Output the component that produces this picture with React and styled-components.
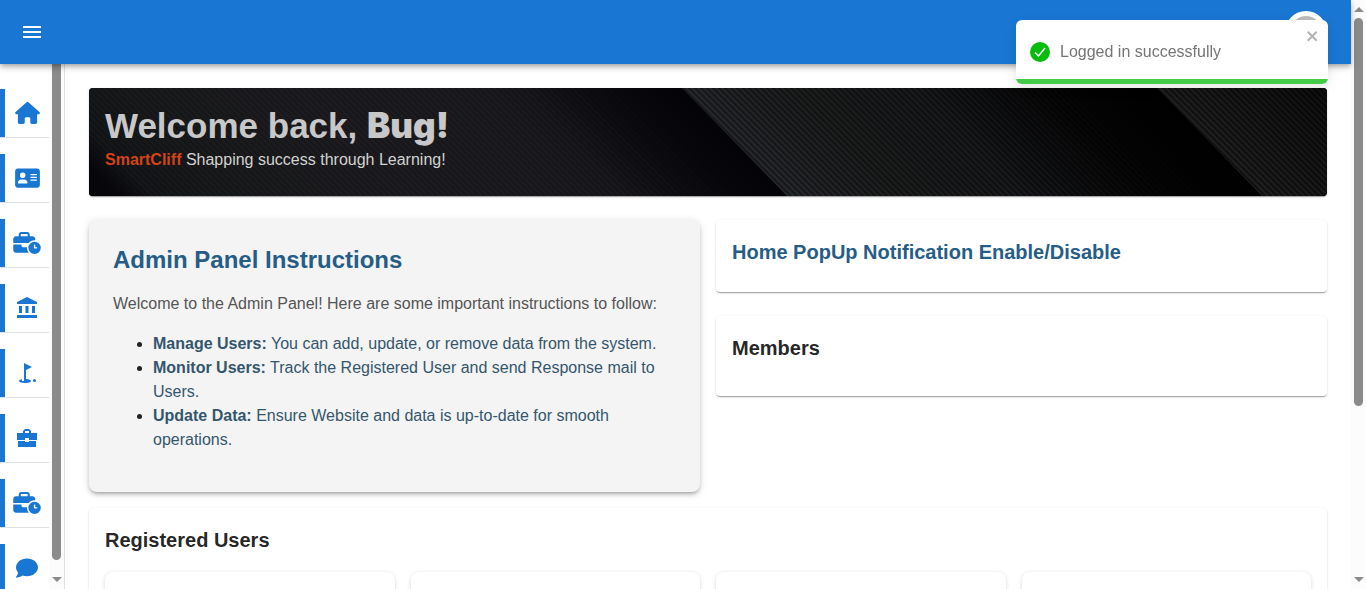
import React from "react";
import styled, { createGlobalStyle } from "styled-components";
import { FaHouse, FaAddressCard, FaBusinessTime, FaComment } from "react-icons/fa6";
import { MdAccountBalance, MdGolfCourse, MdMenu } from "react-icons/md";

const GlobalStyle = createGlobalStyle`
  *, *::before, *::after { box-sizing: border-box; }
  body {
    margin: 0;
    background: #fff;
    color: rgba(0, 0, 0, 0.87);
    font-family: "Liberation Sans", Arial, sans-serif;
    font-size: 16px;
    line-height: 24px;
  }
  h1, h2, p, ul { margin: 0; }
`;

const Window = styled.div`
  display: flex;
  height: 100vh;
  overflow: hidden;
`;

const Page = styled.div`
  flex: 1;
  min-width: 0;
  display: flex;
  flex-direction: column;
`;

const AppBar = styled.header`
  position: relative;
  z-index: 2;
  flex: none;
  display: flex;
  align-items: center;
  justify-content: space-between;
  height: 64px;
  padding: 0 24px 0 20px;
  background: #1976d2;
  color: #fff;
  box-shadow: 0 2px 4px -1px rgba(0, 0, 0, 0.2), 0 4px 5px rgba(0, 0, 0, 0.14),
    0 1px 10px rgba(0, 0, 0, 0.12);
`;

const IconButton = styled.button`
  display: flex;
  padding: 0;
  border: 0;
  background: none;
  color: inherit;
  cursor: pointer;
`;

const Avatar = styled.span`
  display: block;
  width: 42px;
  height: 42px;
  border: 5px solid #fff;
  border-radius: 50%;
  background: #bdbdbd;
`;

const Body = styled.div`
  flex: 1;
  min-height: 0;
  display: flex;
`;

const Sidebar = styled.aside`
  flex: none;
  display: flex;
  width: 65px;
  border-right: 1px solid #e0e0e0;
  overflow: hidden;
`;

const NavList = styled.nav`
  flex: 1;
  display: flex;
  flex-direction: column;
  gap: 16px;
  padding-top: 25px;
`;

const NavItem = styled.a`
  flex: none;
  display: flex;
  align-items: center;
  justify-content: center;
  height: 49px;
  padding-left: 5px;
  border-bottom: 1px solid #e0e0e0;
  box-shadow: inset 5px 0 #1976d2;
  color: #1976d2;
  text-decoration: none;

  svg {
    width: ${(p) => p.$width}px;
    height: ${(p) => (p.$width === 24 ? 24 : 22)}px;
  }
`;

const Track = styled.div`
  flex: none;
  display: flex;
  flex-direction: column;
  align-items: center;
  width: 15px;
  padding: ${(p) => (p.$top ? "7px" : "0")} 0 7px;
  background: #fcfcfc;
`;

const Thumb = styled.div`
  width: 9px;
  flex: ${(p) => p.$share} 1 0;
  margin-top: ${(p) => (p.$rounded ? "6px" : "0")};
  border-radius: ${(p) => (p.$rounded ? "5px" : "0 0 5px 5px")};
  background: #8b8b8b;
`;

const Rest = styled.div`
  flex: ${(p) => p.$share} 1 0;
`;

const Arrow = styled.div`
  border: 5px solid transparent;
  border-top-width: ${(p) => (p.$up ? "0" : "5px")};
  border-bottom-width: ${(p) => (p.$up ? "5px" : "0")};
  border-top-color: #8b8b8b;
  border-bottom-color: #8b8b8b;
`;

const Main = styled.main`
  flex: 1;
  min-width: 0;
  padding: 24px;
  overflow: hidden;
`;

const Banner = styled.section`
  position: relative;
  overflow: hidden;
  min-height: 108px;
  padding: 18px 16px;
  border-radius: 4px;
  background: #101114;
  color: #c8c8c8;
  box-shadow: 0 2px 1px -1px rgba(0, 0, 0, 0.2), 0 1px 1px rgba(0, 0, 0, 0.14),
    0 1px 3px rgba(0, 0, 0, 0.12);
`;

const BannerArt = styled.svg`
  position: absolute;
  inset: 0;
  width: 100%;
  height: 100%;
`;

const BannerTitle = styled.h1`
  position: relative;
  font-size: 35px;
  line-height: 38px;
  font-weight: 700;
`;

const UserName = styled.span`
  font-family: Inter, "Liberation Sans", sans-serif;
  font-weight: 900;
`;

const BannerText = styled.p`
  position: relative;
  margin-top: 3px;
  color: #d2d2d2;
`;

const Brand = styled.b`
  color: #d2431a;
`;

const Columns = styled.div`
  display: grid;
  grid-template-columns: 1fr 1fr;
  gap: 16px;
  align-items: start;
  margin-top: 24px;
`;

const Stack = styled.div`
  display: grid;
  gap: 24px;
`;

const Card = styled.section`
  padding: 16px;
  min-height: ${(p) => p.$min || "0"};
  border-radius: 4px;
  background: #fff;
  box-shadow: 0 2px 1px -1px rgba(0, 0, 0, 0.2), 0 1px 1px rgba(0, 0, 0, 0.14),
    0 1px 3px rgba(0, 0, 0, 0.12);
`;

const CardTitle = styled.h2`
  font-size: 20px;
  line-height: 32px;
  font-weight: 700;
  color: ${(p) => (p.$blue ? "#265d87" : "inherit")};
`;

const Instructions = styled.section`
  padding: 24px 24px 40px;
  border-radius: 8px;
  background: #f4f4f4;
  box-shadow: 0 3px 3px -2px rgba(0, 0, 0, 0.2), 0 3px 4px rgba(0, 0, 0, 0.14),
    0 1px 8px rgba(0, 0, 0, 0.12);
`;

const InstructionsTitle = styled.h2`
  font-size: 24px;
  line-height: 32px;
  color: #265d87;
`;

const Intro = styled.p`
  margin-top: 16px;
  color: #555;
`;

const Steps = styled.ul`
  margin-top: 16px;
  padding-left: 40px;
`;

const Step = styled.li`
  color: #34566d;

  &::marker {
    color: #212121;
  }
`;

const Tiles = styled.div`
  display: grid;
  grid-template-columns: repeat(4, 1fr);
  gap: 16px;
  margin-top: 16px;
`;

const Tile = styled.div`
  height: 120px;
  border-radius: 8px;
  background: #fff;
  box-shadow: 0 1px 4px rgba(0, 0, 0, 0.16);
`;

const Registered = styled(Card)`
  margin-top: 16px;
`;

const Toast = styled.div`
  position: fixed;
  z-index: 3;
  top: 20px;
  right: 38px;
  display: flex;
  align-items: center;
  gap: 10px;
  width: 312px;
  height: 64px;
  padding: 0 14px;
  border-radius: 6px;
  overflow: hidden;
  background: #fff;
  color: #757575;
  box-shadow: 0 4px 12px rgba(0, 0, 0, 0.1);
`;

const ToastClose = styled(IconButton)`
  position: absolute;
  top: 8px;
  right: 8px;
  color: #b3b3b3;
`;

const ToastBar = styled.div`
  position: absolute;
  inset: auto 0 0;
  height: 5px;
  background: #43cc47;
`;

const BusinessCenter = () => (
  <svg viewBox="0 0 24 24" fill="currentColor" aria-hidden="true">
    <path d="M10 16v-1H3v6h18v-6h-7v1h-4zm12-9h-6V5l-2-2h-4L8 5v2H2v7h8v-2h4v2h8V7zm-8 0h-4V5h4v2z" />
  </svg>
);

const navItems = [
  { label: "Home", icon: <FaHouse />, width: 25 },
  { label: "Contacts", icon: <FaAddressCard />, width: 25 },
  { label: "Job openings", icon: <FaBusinessTime />, width: 28 },
  { label: "Institutions", icon: <MdAccountBalance />, width: 24 },
  { label: "Courses", icon: <MdGolfCourse />, width: 24 },
  { label: "Business", icon: <BusinessCenter />, width: 24 },
  { label: "Placements", icon: <FaBusinessTime />, width: 28 },
  { label: "Messages", icon: <FaComment />, width: 22 },
];

const steps = [
  ["Manage Users:", "You can add, update, or remove data from the system."],
  ["Monitor Users:", "Track the Registered User and send Response mail to Users."],
  ["Update Data:", "Ensure Website and data is up-to-date for smooth operations."],
];

/* Three overlapping sheets of dark carbon fibre, each casting a shadow on the one before it. */
const slanted = { gradientUnits: "userSpaceOnUse", gradientTransform: "skewX(44)" };

const CarbonArt = () => (
  <BannerArt viewBox="0 0 1238 108" preserveAspectRatio="none" aria-hidden="true">
    <defs>
      <linearGradient id="left" {...slanted} x1="-108" x2="593">
        <stop offset="0" stopColor="#101114" />
        <stop offset="0.2" stopColor="#17181a" />
        <stop offset="0.45" stopColor="#1b1b1f" />
        <stop offset="0.7" stopColor="#19191d" />
        <stop offset="1" stopColor="#101014" />
      </linearGradient>
      <linearGradient id="leftShade" {...slanted} x1="430" x2="593">
        <stop offset="0" stopColor="#030308" stopOpacity="0" />
        <stop offset="0.7" stopColor="#030308" stopOpacity="0.8" />
        <stop offset="1" stopColor="#030308" />
      </linearGradient>
      <linearGradient id="middle" {...slanted} x1="593" x2="1068">
        <stop offset="0" stopColor="#212226" />
        <stop offset="0.25" stopColor="#171818" />
        <stop offset="0.6" stopColor="#131417" />
        <stop offset="1" stopColor="#0b0b0c" />
      </linearGradient>
      <linearGradient id="middleShade" {...slanted} x1="820" x2="1068">
        <stop offset="0" stopColor="#000" stopOpacity="0" />
        <stop offset="0.65" stopColor="#000" stopOpacity="0.8" />
        <stop offset="1" stopColor="#000" />
      </linearGradient>
      <linearGradient id="right" {...slanted} x1="1068" x2="1238">
        <stop offset="0" stopColor="#191919" />
        <stop offset="1" stopColor="#080808" />
      </linearGradient>
      <linearGradient id="corner" {...slanted} x1="-108" x2="-40">
        <stop offset="0" stopColor="#050509" />
        <stop offset="0.5" stopColor="#050509" stopOpacity="0.8" />
        <stop offset="1" stopColor="#050509" stopOpacity="0" />
      </linearGradient>
      <pattern id="weave" width="6" height="6" patternUnits="userSpaceOnUse">
        <path d="M-1-1 7 7M-1 5 1 7M5-1 7 1" stroke="#000" strokeOpacity="0.5" strokeWidth="2" />
        <path d="M2-1 7 4M-1 2 4 7" stroke="#fff" strokeOpacity="0.04" strokeWidth="2" />
      </pattern>
    </defs>
    <path d="M0 0H600L705 108H0Z" fill="url(#left)" />
    <path d="M0 0H600L705 108H0Z" fill="url(#weave)" opacity="0.25" />
    <path d="M0 0H70V108H0Z" fill="url(#corner)" />
    <path d="M400 0H600L705 108H400Z" fill="url(#leftShade)" />
    <path d="M593 0H1075L1180 108H698Z" fill="url(#middle)" />
    <path d="M593 0H1075L1180 108H698Z" fill="url(#weave)" opacity="0.6" />
    <path d="M800 0H1075L1180 108H800Z" fill="url(#middleShade)" />
    <path d="M1068 0H1238V108H1173Z" fill="url(#right)" />
    <path d="M1068 0H1238V108H1173Z" fill="url(#weave)" opacity="0.7" />
  </BannerArt>
);

export default function App() {
  return (
    <>
      <GlobalStyle />
      <Window>
        <Page>
          <AppBar>
            <IconButton aria-label="Open menu">
              <MdMenu size={24} />
            </IconButton>
            <Avatar />
          </AppBar>
          <Body>
            <Sidebar>
              <NavList>
                {navItems.map((item) => (
                  <NavItem key={item.label} href="#" aria-label={item.label} $width={item.width}>
                    {item.icon}
                  </NavItem>
                ))}
              </NavList>
              <Track aria-hidden="true">
                <Thumb $share={496} />
                <Rest $share={17} />
                <Arrow />
              </Track>
            </Sidebar>
            <Main>
              <Banner>
                <CarbonArt />
                <BannerTitle>
                  Welcome back, <UserName>Bug!</UserName>
                </BannerTitle>
                <BannerText>
                  <Brand>SmartCliff</Brand> Shapping success through Learning!
                </BannerText>
              </Banner>
              <Columns>
                <Instructions>
                  <InstructionsTitle>Admin Panel Instructions</InstructionsTitle>
                  <Intro>
                    Welcome to the Admin Panel! Here are some important instructions to follow:
                  </Intro>
                  <Steps>
                    {steps.map(([name, text]) => (
                      <Step key={name}>
                        <b>{name}</b> {text}
                      </Step>
                    ))}
                  </Steps>
                </Instructions>
                <Stack>
                  <Card $min="72px">
                    <CardTitle $blue>Home PopUp Notification Enable/Disable</CardTitle>
                  </Card>
                  <Card $min="80px">
                    <CardTitle>Members</CardTitle>
                  </Card>
                </Stack>
              </Columns>
              <Registered>
                <CardTitle>Registered Users</CardTitle>
                <Tiles>
                  <Tile />
                  <Tile />
                  <Tile />
                  <Tile />
                </Tiles>
              </Registered>
            </Main>
          </Body>
        </Page>
        <Track $top aria-hidden="true">
          <Arrow $up />
          <Thumb $rounded $share={388} />
          <Rest $share={171} />
          <Arrow />
        </Track>
      </Window>
      <Toast role="alert">
        <svg width="20" height="20" viewBox="0 0 20 20" aria-hidden="true">
          <circle cx="10" cy="10" r="10" fill="#07bc0c" />
          <path d="M5 10.5 8.5 14 15 6" fill="none" stroke="#fff" strokeWidth="1.5" />
        </svg>
        Logged in successfully
        <ToastClose aria-label="Close">
          <svg width="14" height="16" viewBox="0 0 14 16" fill="currentColor" aria-hidden="true">
            <path
              fillRule="evenodd"
              d="M7.71 8.23l3.75 3.75-1.48 1.48-3.75-3.75-3.75 3.75L1 11.98l3.75-3.75L1 4.48 2.48 3l3.75 3.75L9.98 3l1.48 1.48-3.75 3.75z"
            />
          </svg>
        </ToastClose>
        <ToastBar />
      </Toast>
    </>
  );
}
